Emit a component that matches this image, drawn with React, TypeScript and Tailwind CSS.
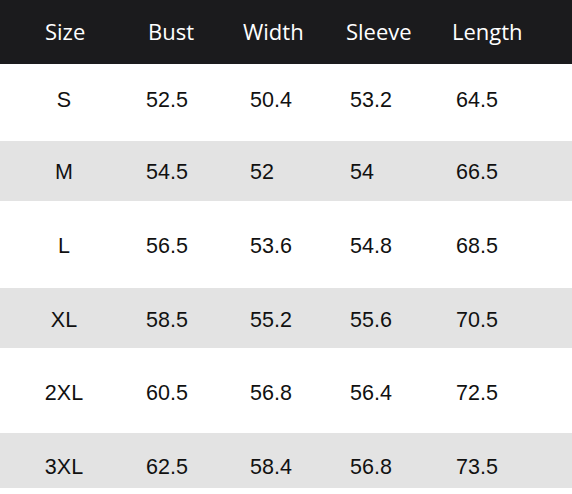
const header = ["Size", "Bust", "Width", "Sleeve", "Length"];

const rows = [
  { size: "S", vals: ["52.5", "50.4", "53.2", "64.5"], h: "h-[77px]", bg: "bg-white", pt: "pb-[4px]" },
  { size: "M", vals: ["54.5", "52", "54", "66.5"], h: "h-[60px]", bg: "bg-[#e3e3e3]", pt: "pt-[2px]" },
  { size: "L", vals: ["56.5", "53.6", "54.8", "68.5"], h: "h-[87px]", bg: "bg-white", pt: "pt-[4px]" },
  { size: "XL", vals: ["58.5", "55.2", "55.6", "70.5"], h: "h-[60px]", bg: "bg-[#e3e3e3]", pt: "pt-[4px]" },
  { size: "2XL", vals: ["60.5", "56.8", "56.4", "72.5"], h: "h-[85px]", bg: "bg-white", pt: "pt-[5px]" },
  { size: "3XL", vals: ["62.5", "58.4", "56.8", "73.5"], h: "h-[55px]", bg: "bg-[#e3e3e3]", pt: "pt-[13px]" },
];

const cols = "grid grid-cols-[128px_102px_102px_104px_136px]";

export default function App() {
  return (
    <div className="w-[572px] h-[494px] bg-white overflow-hidden">
      <div className={`${cols} h-[64px] items-center bg-[#1b1b1d] text-white text-[22px] font-['Open_Sans',sans-serif] pb-[1px]`}>
        {header.map((h, i) => (
          <div key={h} className={i === 0 ? "pl-[45px]" : i === 1 ? "pl-[20px]" : i === 2 ? "pl-[13px]" : i === 3 ? "pl-[14px]" : "pl-[16px]"}>
            {h}
          </div>
        ))}
      </div>
      {rows.map((r) => (
        <div key={r.size} className={`${cols} ${r.h} ${r.bg} ${r.pt} items-center text-[21.5px] text-[#111] font-['Liberation_Sans',Arial,sans-serif]`}>
          <div className="text-center">{r.size}</div>
          <div className="pl-[18px]">{r.vals[0]}</div>
          <div className="pl-[20px]">{r.vals[1]}</div>
          <div className="pl-[18px]">{r.vals[2]}</div>
          <div className="pl-[20px]">{r.vals[3]}</div>
        </div>
      ))}
    </div>
  );
}
